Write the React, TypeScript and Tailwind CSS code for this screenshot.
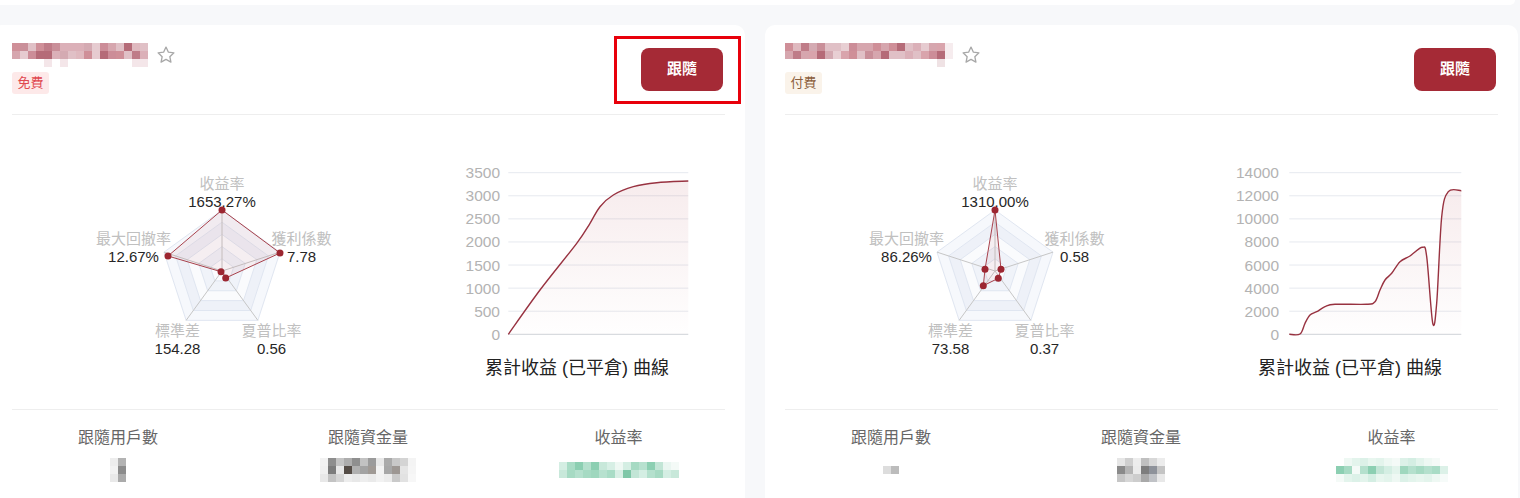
import React from "react";

type Pt = [number, number];

function rng(seed: number) {
  let s = seed;
  return () => {
    s = (s * 16807) % 2147483647;
    return (s - 1) / 2147483646;
  };
}

function makeMosaic(seed: number, cols: number, rows: number, palette: string[]): (string | null)[][] {
  const r = rng(seed);
  const out: (string | null)[][] = [];
  for (let y = 0; y < rows; y++) {
    const row: (string | null)[] = [];
    for (let x = 0; x < cols; x++) {
      row.push(palette[Math.floor(r() * palette.length)]);
    }
    out.push(row);
  }
  return out;
}

function Mosaic({ cells }: { cells: (string | null)[][] }) {
  return (
    <div className="flex flex-col">
      {cells.map((row, i) => (
        <div key={i} className="flex">
          {row.map((c, j) => (
            <div key={j} className="w-2 h-2" style={{ backgroundColor: c ?? "transparent" }} />
          ))}
        </div>
      ))}
    </div>
  );
}

const PINK = ["#cf8f98", "#d6a6ae", "#e6cbd0", "#d4aab2", "#e0c0c6", "#c98f99", "#dbb0b8", "#b56b78", "#e8cfd3", "#cc8d98", "#dfb9bf", "#bf7c88", "#d9a4ac"];

function smooth(pts: Pt[]) {
  let d = `M${pts[0][0]},${pts[0][1]}`;
  for (let i = 0; i < pts.length - 1; i++) {
    const p0 = pts[i - 1] || pts[i];
    const p1 = pts[i];
    const p2 = pts[i + 1];
    const p3 = pts[i + 2] || p2;
    const c1: Pt = [p1[0] + (p2[0] - p0[0]) / 6, p1[1] + (p2[1] - p0[1]) / 6];
    const c2: Pt = [p2[0] - (p3[0] - p1[0]) / 6, p2[1] - (p3[1] - p1[1]) / 6];
    d += ` C${c1[0].toFixed(2)},${c1[1].toFixed(2)} ${c2[0].toFixed(2)},${c2[1].toFixed(2)} ${p2[0]},${p2[1]}`;
  }
  return d;
}

const CX = 210;
const CY = 156;
const R = 61;
const ANG = [-90, -18, 54, 126, 198].map((a) => (a * Math.PI) / 180);

function pent(scale: number) {
  return ANG.map((a) => `${(CX + Math.cos(a) * R * scale).toFixed(2)},${(CY + Math.sin(a) * R * scale).toFixed(2)}`).join(" ");
}

type RadarProps = {
  dots: Pt[];
  values: { top: string; right: string; br: string; bl: string; left: string };
};

function Radar({ dots, values }: RadarProps) {
  const fills = ["#f6f8fc", "#eef1f8", "#fafbfd", "#f0f3f9", "#fcfcfe"];
  const labels = [
    { x: 210, n: "收益率", v: values.top, y: 68.3 },
    { x: 289.5, n: "獲利係數", v: values.right, y: 123.5 },
    { x: 121.5, n: "最大回撤率", v: values.left, y: 123.5 },
    { x: 165.5, n: "標準差", v: values.bl, y: 215 },
    { x: 259.5, n: "夏普比率", v: values.br, y: 215 },
  ];
  return (
    <svg width={356} height={295} className="block">
      {[1, 0.8, 0.6, 0.4, 0.2].map((s, i) => (
        <polygon key={s} points={pent(s)} fill={fills[i]} stroke="#e0e6f1" strokeWidth={1} />
      ))}
      {ANG.map((a, i) => (
        <line key={i} x1={CX} y1={CY} x2={CX + Math.cos(a) * R} y2={CY + Math.sin(a) * R} stroke="#c6c6c6" strokeWidth={1} />
      ))}
      <polygon points={dots.map((p) => p.join(",")).join(" ")} fill="rgba(165,42,54,0.06)" stroke="#a8424c" strokeWidth={1} />
      {dots.map((p, i) => (
        <circle key={i} cx={p[0]} cy={p[1]} r={3.5} fill="#9c2631" />
      ))}
      {labels.map((l) => (
        <g key={l.n} fontSize={15} textAnchor="middle">
          <text x={l.x} y={l.y} dominantBaseline="central" className="fill-[#c0c0c0]">
            {l.n}
          </text>
          <text x={l.x} y={l.y + 18.4} dominantBaseline="central" className="fill-[#262626]">
            {l.v}
          </text>
        </g>
      ))}
    </svg>
  );
}

type LineProps = {
  labels: string[];
  plotLeft: number;
  labelRight: number;
  pts: Pt[];
  id: string;
};

function LineChart({ labels, plotLeft, labelRight, pts, id }: LineProps) {
  const top = 57.7;
  const bottom = 219.3;
  const right = 320.3;
  const step = (bottom - top) / 7;
  const d = smooth(pts);
  const area = `${d} L${pts[pts.length - 1][0]},${bottom} L${pts[0][0]},${bottom} Z`;
  return (
    <svg width={357} height={240} className="block">
      <defs>
        <linearGradient id={id} x1="0" y1="0" x2="0" y2="1">
          <stop offset="0%" stopColor="rgba(165,42,54,0.09)" />
          <stop offset="100%" stopColor="rgba(165,42,54,0.005)" />
        </linearGradient>
      </defs>
      {labels.map((l, i) => {
        const y = bottom - step * i;
        return (
          <g key={l}>
            <line x1={plotLeft} x2={right} y1={y} y2={y} stroke={i === 0 ? "#cfd2d8" : "#e6e9ef"} strokeWidth={1} />
            <text x={labelRight} y={y} textAnchor="end" dominantBaseline="central" fontSize={15.5} className="fill-[#b3b3b3]">
              {l}
            </text>
          </g>
        );
      })}
      <path d={area} fill={`url(#${id})`} />
      <path d={d} fill="none" stroke="#983240" strokeWidth={1.4} />
    </svg>
  );
}

type CardProps = {
  titleCells: (string | null)[][];
  tag: string;
  tagCls: string;
  radarDots: Pt[];
  radarValues: RadarProps["values"];
  line: LineProps;
  stat1: (string | null)[][];
  stat2: (string | null)[][];
  stat3: (string | null)[][];
  highlight?: boolean;
};

function Star() {
  return (
    <svg width="20" height="20" viewBox="0 0 24 24" fill="none" stroke="#a8a8a8" strokeWidth="1.6" strokeLinejoin="round">
      <path d="M12 2.5l2.9 6.1 6.6.8-4.9 4.6 1.3 6.6L12 17.3l-5.9 3.3 1.3-6.6-4.9-4.6 6.6-.8z" />
    </svg>
  );
}

function Card(p: CardProps) {
  return (
    <div className="relative w-[753px] shrink-0 h-[520px] bg-white rounded-[10px] px-5 pt-5">
      {p.highlight && <div className="absolute left-[622px] top-[11px] w-[127px] h-[68px] border-[3px] border-[#e8000b]" />}
      <div className="flex items-center justify-between pb-5 border-b border-[#eeeeee]">
        <div className="flex flex-col gap-[7px]">
          <div className="h-5 flex items-center gap-2">
            <Mosaic cells={p.titleCells} />
            <Star />
          </div>
          <div className="flex">
            <div className={`h-[22px] w-[37px] rounded-[3px] text-[13px] leading-[22px] text-center ${p.tagCls}`}>{p.tag}</div>
          </div>
        </div>
        <button className="mr-[2px] w-[82px] h-[43px] rounded-[8px] bg-[#a52a36] text-white text-[15px] font-bold">跟隨</button>
      </div>
      <div className="h-[295px] grid grid-cols-[356px_357px] border-b border-[#eeeeee]">
        <Radar dots={p.radarDots} values={p.radarValues} />
        <div className="flex flex-col">
          <LineChart {...p.line} />
          <div className="pl-[61px] text-center text-[18px] leading-[26px] text-[#222]">累計收益 (已平倉) 曲線</div>
        </div>
      </div>
      <div className="grid grid-cols-[212px_288px_1fr] text-[16px] leading-[24px] text-[#666]">
        {[
          { l: "跟隨用戶數", c: p.stat1 },
          { l: "跟隨資金量", c: p.stat2 },
          { l: "收益率", c: p.stat3 },
        ].map((s) => (
          <div key={s.l} className="flex flex-col items-center pt-4">
            <div>{s.l}</div>
            <div className="mt-[6px] h-[28px] flex items-center justify-center">
              <Mosaic cells={s.c} />
            </div>
          </div>
        ))}
      </div>
    </div>
  );
}

export default function App() {
  const t1 = makeMosaic(11, 17, 2, PINK);
  const t1b = [...t1, Array.from({ length: 17 }, (_, i) => ([4, 6, 15, 16].includes(i) ? "#f4e6e9" : null))];
  const t2 = makeMosaic(29, 20, 2, PINK).map((row) => [...row, "#f6ecee"]);
  const t2b = [...t2, Array.from({ length: 21 }, (_, i) => (i === 19 ? "#efe2e4" : null))];

  const leftLine: LineProps = {
    id: "g1",
    labels: ["0", "500", "1000", "1500", "2000", "2500", "3000", "3500"],
    plotLeft: 140.3,
    labelRight: 132,
    pts: [
      [140.3, 219.3],
      [172, 175],
      [208.7, 128.3],
      [222, 108.3],
      [232, 91.7],
      [245.3, 80],
      [265.3, 71.7],
      [288.7, 67.7],
      [320.3, 66],
    ],
  };
  const rightLine: LineProps = {
    id: "g2",
    labels: ["0", "2000", "4000", "6000", "8000", "10000", "12000", "14000"],
    plotLeft: 148.3,
    labelRight: 138,
    pts: [
      [148.3, 219.3],
      [159, 219],
      [164, 208.3],
      [169, 200],
      [175.7, 196.7],
      [184, 191.7],
      [194, 189.3],
      [225.7, 189.3],
      [234, 186.7],
      [239, 175],
      [244, 165],
      [250.7, 158.3],
      [259, 146.7],
      [269, 141],
      [281.3, 132.3],
      [285.7, 141.7],
      [291.7, 208],
      [295.7, 188],
      [300.7, 101.7],
      [307.3, 76.7],
      [320.3, 75.7],
    ],
  };

  return (
    <div className="w-[1520px] h-[498px] overflow-hidden bg-[#f7f8fa] font-['Liberation_Sans','Noto_Sans_CJK_TC',sans-serif]">
      <div className="ml-[-8px] flex flex-col gap-5">
        <div className="w-[1523px] h-[5px] bg-white rounded-b-[10px]" />
        <div className="flex gap-5">
          <Card
            highlight
            titleCells={t1b}
            tag="免費"
            tagCls="bg-[#fde9e9] text-[#e0484f]"
            radarDots={[
              [210, 95],
              [268, 138],
              [213.7, 163],
              [209, 156.7],
              [156, 141],
            ]}
            radarValues={{ top: "1653.27%", right: "7.78", br: "0.56", bl: "154.28", left: "12.67%" }}
            line={leftLine}
            stat1={[
              ["#ededed", "#b3b3b3"],
              ["#f2f2f2", "#8c8c8c"],
              ["#e9e9e9", "#ababab"],
            ]}
            stat2={[
              ["#f2f2f2", "#8e8e8e", "#c4c4c4", "#adadad", "#8f8f8f", "#c2c2c2", "#9b9b9b", "#e8e8e8", "#aaaaaa", "#c8c8c8", "#d4d4d4", "#f4f4f4"],
              ["#f0f0f0", "#7c7c7c", "#e8e8e8", "#554d47", "#b0b0b0", "#a3a3a3", "#a09a95", "#f3f3f3", "#a7a7a7", "#9d9793", "#e5e5e5", "#f5f5f5"],
              ["#e8e8e8", "#c3c3c3", "#d6d6d6", "#ededed", "#e8e8e8", "#eeeeee", "#eaeaea", "#f2f2f2", "#ececec", "#cacaca", "#e2e2e2", "#f7f7f7"],
            ]}
            stat3={[
              ["#d4eee3", "#a9dcc6", "#8ccfb2", "#b4e0cd", "#8ccfb2", "#c8e8da", "#d7efe5", "#eef8f3", "#d4eee3", "#a6dac3", "#b7e1cf", "#8ccfb2", "#c2e5d6", "#eaf6f1", "#f4faf7"],
              ["#c8e8da", "#a6dac3", "#b4e0cd", "#a6dac3", "#9fd7be", "#b7e1cf", "#a9dcc6", "#d8efe5", "#7fc7a8", "#c2e5d6", "#d4eee3", "#b4e0cd", "#a6dac3", "#d4eee3", "#c8e8da"],
            ]}
          />
          <Card
            titleCells={t2b}
            tag="付費"
            tagCls="bg-[#faf3ea] text-[#8b5e3c]"
            radarDots={[
              [210, 95],
              [216, 154.3],
              [213.3, 163.3],
              [198.3, 170.7],
              [200, 154.3],
            ]}
            radarValues={{ top: "1310.00%", right: "0.58", br: "0.37", bl: "73.58", left: "86.26%" }}
            line={rightLine}
            stat1={[["#dddddd", "#bcbcbc"]]}
            stat2={[
              ["#e6e6e6", "#cfcfcf", "#ededed", "#c0c0c0", "#d8d8d8", "#ececec"],
              ["#8a8a8a", "#b4b4b4", "#ebebeb", "#7d7d7d", "#8e929a", "#c4c4c4"],
              ["#c6c6c6", "#d6d6d6", "#cdcdcd", "#a9a9a9", "#c0c2c6", "#e8e8e8"],
            ]}
            stat3={[
              [null, "#eef8f3", "#e3f4ec", "#dcf1e8", "#e8f6ef", "#e3f4ec", "#eef8f3", "#f4faf7", "#dcf1e8", "#d4eee3", "#e3f4ec", "#eef8f3", "#f4faf7", null],
              ["#8ccfb2", "#a6dac3", "#f4faf7", "#b4e0cd", "#8ccfb2", "#c2e5d6", "#d4eee3", "#e3f4ec", "#9fd7be", "#b4e0cd", "#a6dac3", "#b4e0cd", "#a9dcc6", "#dcf1e8"],
              ["#f4faf7", "#e3f4ec", "#dcf1e8", "#e3f4ec", "#d4eee3", "#e8f6ef", "#e3f4ec", "#eef8f3", "#dcf1e8", "#e3f4ec", "#e8f6ef", "#e3f4ec", "#eef8f3", "#f6fbf9"],
            ]}
          />
        </div>
      </div>
    </div>
  );
}
